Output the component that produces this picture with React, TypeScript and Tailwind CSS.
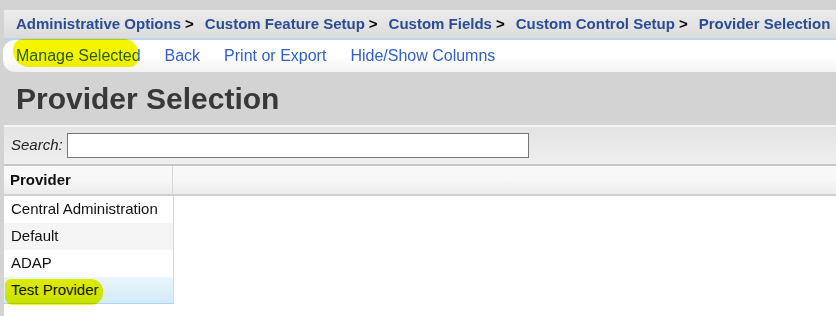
import React from 'react';

const crumbs = ['Administrative Options', 'Custom Feature Setup', 'Custom Fields', 'Custom Control Setup', 'Provider Selection'];
const links = ['Back', 'Print or Export', 'Hide/Show Columns'];
const rows = ['Central Administration', 'Default', 'ADAP', 'Test Provider'];

const App = () => {
  return (
    <div className="w-[836px] h-[316px] overflow-hidden bg-[#d3d3d3] font-['Liberation_Sans',Arial,sans-serif]">
      {/* Breadcrumb */}
      <div className="pt-[10px] pl-[4px]">
        <div className="h-[30px] flex items-center pl-[12px] bg-gradient-to-b from-[#ececec] to-[#dcdcdc] border-b-2 border-[#bcd6f0] whitespace-nowrap text-[15px] font-bold">
          {crumbs.map((c, i) => (
            <span key={c} className="flex items-center">
              <span className="text-[#2a4c94]">{c}</span>
              {i < crumbs.length - 1 && <span className="text-black ml-[4px] mr-[11px]">&gt;</span>}
            </span>
          ))}
        </div>
        {/* Toolbar */}
        <div className="h-[32px] -ml-[1px] flex items-center pl-[13px] gap-[24px] bg-gradient-to-b from-white via-white to-[#f2f2f2] rounded-l-[12px] text-[16px] text-[#2f5fc8] whitespace-nowrap">
          <span className="relative">
            Manage Selected
            <span className="absolute -left-[3px] -top-[5px] w-[125px] h-[28px] bg-[#f5f500] rounded-[10px_14px_8px_16px] mix-blend-multiply" />
          </span>
          {links.map(l => (
            <span key={l}>{l}</span>
          ))}
        </div>
      </div>

      {/* Title */}
      <h1 className="pl-[16px] pt-[6px] h-[53px] text-[30px] font-bold text-[#383838] leading-[42px]">Provider Selection</h1>

      <div className="ml-[4px] bg-white h-[200px]">
        {/* Search */}
        <div className="border-t-2 border-[#f4f4f4] h-[41px] flex items-center pl-[7px] bg-gradient-to-b from-[#e3e3e3] to-[#efefef] border-b-2 border-b-[#c6c6c6]">
          <span className="italic text-[15px] text-[#222] mr-[4px]">Search:</span>
          <div className="w-[462px] h-[25px] bg-white border border-[#767676]" />
        </div>

        {/* Table */}
        <div className="flex h-[30px] bg-gradient-to-b from-[#f9f9f9] via-[#f7f7f7] to-[#ebecee] border-b-2 border-[#cfcfcf]">
          <div className="w-[169px] border-r border-[#d8d8d8] flex items-center pl-[6px] text-[15px] font-bold text-[#111]">Provider</div>
          <div className="flex-1" />
        </div>
        <div className="w-[170px] border-r border-[#d8d8d8]">
          {rows.map((r, i) => {
            const last = i === rows.length - 1;
            return (
              <div
                key={r}
                className={`h-[27px] flex items-center pl-[7px] text-[15px] text-[#111] ${
                  last
                    ? 'bg-gradient-to-b from-[#eaf5fc] to-[#d3ebf8] border-b border-[#a9d8f0] relative'
                    : i % 2 === 1
                    ? 'bg-[#f5f5f5]'
                    : 'bg-white'
                }`}
              >
                {r}
                {last && (
                  <span className="absolute left-[1px] top-[2px] w-[98px] h-[26px] bg-[#f5f500] rounded-[6px_12px_12px_8px] mix-blend-multiply" />
                )}
              </div>
            );
          })}
        </div>
      </div>
    </div>
  );
};

export default App;
